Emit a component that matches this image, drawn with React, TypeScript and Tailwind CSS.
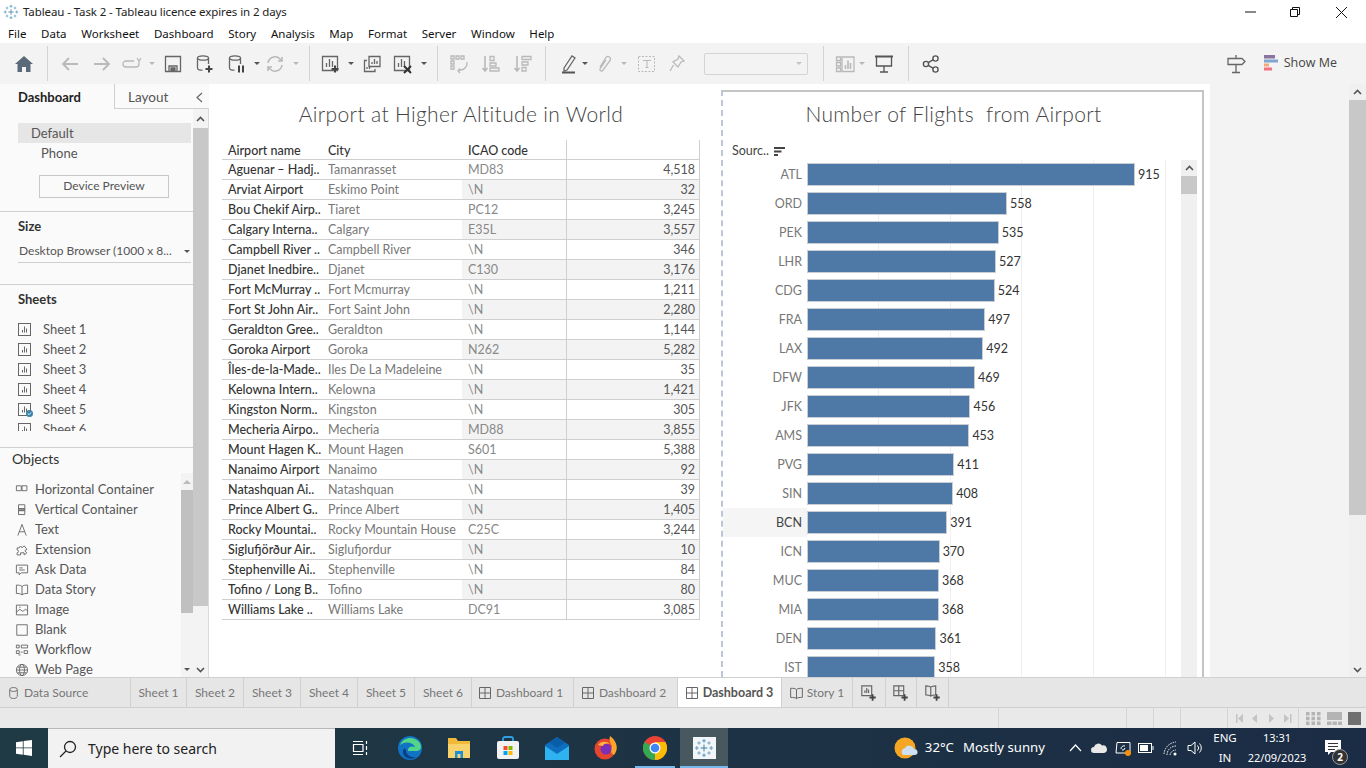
import type { ReactNode } from "react";

const rows = [
  ["Aguenar – Hadj..", "Tamanrasset", "MD83", "4,518"],
  ["Arviat Airport", "Eskimo Point", "\\N", "32"],
  ["Bou Chekif Airp..", "Tiaret", "PC12", "3,245"],
  ["Calgary Interna..", "Calgary", "E35L", "3,557"],
  ["Campbell River ..", "Campbell River", "\\N", "346"],
  ["Djanet Inedbire..", "Djanet", "C130", "3,176"],
  ["Fort McMurray ..", "Fort Mcmurray", "\\N", "1,211"],
  ["Fort St John Air..", "Fort Saint John", "\\N", "2,280"],
  ["Geraldton Gree..", "Geraldton", "\\N", "1,144"],
  ["Goroka Airport", "Goroka", "N262", "5,282"],
  ["Îles-de-la-Made..", "Iles De La Madeleine", "\\N", "35"],
  ["Kelowna Intern..", "Kelowna", "\\N", "1,421"],
  ["Kingston Norm..", "Kingston", "\\N", "305"],
  ["Mecheria Airpo..", "Mecheria", "MD88", "3,855"],
  ["Mount Hagen K..", "Mount Hagen", "S601", "5,388"],
  ["Nanaimo Airport", "Nanaimo", "\\N", "92"],
  ["Natashquan Ai..", "Natashquan", "\\N", "39"],
  ["Prince Albert G..", "Prince Albert", "\\N", "1,405"],
  ["Rocky Mountai..", "Rocky Mountain House", "C25C", "3,244"],
  ["Siglufjörður Air..", "Siglufjordur", "\\N", "10"],
  ["Stephenville Ai..", "Stephenville", "\\N", "84"],
  ["Tofino / Long B..", "Tofino", "\\N", "80"],
  ["Williams Lake ..", "Williams Lake", "DC91", "3,085"],
];

const flights: [string, number][] = [
  ["ATL", 915], ["ORD", 558], ["PEK", 535], ["LHR", 527], ["CDG", 524], ["FRA", 497],
  ["LAX", 492], ["DFW", 469], ["JFK", 456], ["AMS", 453], ["PVG", 411], ["SIN", 408],
  ["BCN", 391], ["ICN", 370], ["MUC", 368], ["MIA", 368], ["DEN", 361], ["IST", 358],
];

const menu = ["File", "Data", "Worksheet", "Dashboard", "Story", "Analysis", "Map", "Format", "Server", "Window", "Help"];

function Ic({ s = 20, c = "#666", w = 1.3, children }: { s?: number; c?: string; w?: number; children: ReactNode }) {
  return (
    <svg width={s} height={s} viewBox="0 0 20 20" fill="none" stroke={c} strokeWidth={w}>
      {children}
    </svg>
  );
}

function Slot({ className, children }: { className: string; children?: ReactNode }) {
  return <div className={`flex h-full shrink-0 items-center justify-center ${className}`}>{children}</div>;
}

function Caret({ c = "#555" }: { c?: string }) {
  return <div className="h-0 w-0 border-x-[3px] border-t-[3px] border-x-transparent" style={{ borderTopColor: c }} />;
}

function Sep({ className }: { className: string }) {
  return <div className={`h-[35px] w-px shrink-0 bg-[#d4d4d4] ${className}`} />;
}

function TableauMark({ s = 16 }: { s?: number }) {
  const crosses: [number, number, number, string][] = [
    [10, 10, 3.4, "#3d7ea6"], [10, 2.8, 1.9, "#5b9bc4"], [10, 17.2, 1.9, "#5b9bc4"], [2.8, 10, 1.9, "#5b9bc4"],
    [17.2, 10, 1.9, "#5b9bc4"], [5, 5, 1.7, "#6ba8cc"], [15, 5, 1.7, "#6ba8cc"], [5, 15, 1.7, "#6ba8cc"], [15, 15, 1.7, "#6ba8cc"],
  ];
  return (
    <svg width={s} height={s} viewBox="0 0 20 20" fill="none" strokeWidth={1}>
      {crosses.map(([x, y, r, col], i) => (
        <path key={i} d={`M${x - r} ${y}H${x + r}M${x} ${y - r}V${y + r}`} stroke={col} />
      ))}
    </svg>
  );
}

function ChartGlyph({ c = "#666" }: { c?: string }) {
  return (
    <svg width="14" height="14" viewBox="0 0 14 14" fill="none" stroke={c}>
      <rect x="0.5" y="0.5" width="12" height="12" />
      <path d="M4.5 9.5V7M6.5 9.5V3.5M8.5 9.5V5.5" />
    </svg>
  );
}

function Plus({ c = "#444" }: { c?: string }) {
  return <path d="M14 11.5v7M10.5 15h7" stroke={c} strokeWidth="2" />;
}

function Toolbar() {
  const off = "#b9b9b9";
  return (
    <div className="flex h-[41px] shrink-0 items-center bg-[#f3f3f3] pl-2">
      <Slot className="w-8">
        <svg width="18" height="16" viewBox="0 0 18 16" fill="#5a6a78"><path d="M9 0 0 8h2.5v8H7v-5h4v5h4.5V8H18z" /></svg>
      </Slot>
      <Sep className="ml-[7px]" />
      <Slot className="ml-[6px] w-8"><Ic c={off} w={1.8}><path d="M18 10H3M9 4l-6 6 6 6" /></Ic></Slot>
      <Slot className="w-[31px]"><Ic c={off} w={1.8}><path d="M2 10h15M11 4l6 6-6 6" /></Ic></Slot>
      <Slot className="w-[30px]"><Ic c={off} s={20}><path d="M12 7H4a3 3 0 0 0 0 6h10a3 3 0 0 0 3-3V7M15 4l2 3 2-3" /></Ic></Slot>
      <Slot className="w-[10px]"><Caret c={off} /></Slot>
      <Slot className="w-8"><Ic c="#666"><path d="M2.5 2.5h15v15h-15zM6 17.5V12h8v5.5" /><path d="M8 14h4v3H8z" fill="#666" /></Ic></Slot>
      <Slot className="w-8"><Ic c="#666"><ellipse cx="8" cy="4" rx="5.5" ry="2.2" /><path d="M2.5 4v10c0 1.3 2 2.2 5 2.2M13.5 4v6" /><Plus /></Ic></Slot>
      <Slot className="w-8"><Ic c="#666"><ellipse cx="8" cy="4" rx="5.5" ry="2.2" /><path d="M2.5 4v10c0 1.3 2 2.2 5 2.2M13.5 4v6" /><path d="M12 11.5v7M16 11.5v7" stroke="#444" strokeWidth="2" /></Ic></Slot>
      <Slot className="w-[7px]"><Caret /></Slot>
      <Slot className="w-[30px]"><Ic c={off} w={1.6}><path d="M3 9a7 7 0 0 1 12-4l2 2M17 11a7 7 0 0 1-12 4l-2-2" /><path d="M17 3v4h-4M3 17v-4h4" /></Ic></Slot>
      <Slot className="w-3"><Caret c={off} /></Slot>
      <Sep className="ml-[7px]" />
      <Slot className="ml-[5px] w-8"><Ic><path d="M1.5 2.5h15v14h-15z" /><path d="M5.5 13V9M8.5 13V5M11.5 13V7" /><Plus /></Ic></Slot>
      <Slot className="w-[8px]"><Caret /></Slot>
      <Slot className="ml-[1px] w-[31px]"><Ic><path d="M7 2.5h11v10H7zM10 10V8M12.5 10V5M15 10V7" /><path d="M5 6.500H2.500v11H13V15M5 15v-2M7.500 15v-3" /></Ic></Slot>
      <Slot className="w-8"><Ic><path d="M1.500 2.500h15v14h-15z" /><path d="M5.500 13V9M8.500 13V5M11.500 13V7" /><path d="M11 12l7 7M18 12l-7 7" stroke="#333" strokeWidth="2" /></Ic></Slot>
      <Slot className="w-[9px]"><Caret /></Slot>
      <Sep className="ml-[9px]" />
      <Slot className="ml-[5px] w-[32px]"><Ic c={off}><path d="M2 2h3v3H2zM7 2h3v3H7zM12 2h3v3h-3zM2 7h3v3H2zM2 12h3v3H2z" /><path d="M18 8a7 7 0 0 1-6 8l-3 1M11 14.500 9 17l2 2" /></Ic></Slot>
      <Slot className="w-[32px]"><Ic c={off}><path d="M4 2v15M1.500 14 4 17l2.500-3" strokeWidth="1.600" /><path d="M9 2.500h4v4H9zM9 9h6v3H9zM9 14h9v3H9z" /></Ic></Slot>
      <Slot className="w-[32px]"><Ic c={off}><path d="M4 2v15M1.500 14 4 17l2.500-3" strokeWidth="1.600" /><path d="M9 2.500h9v3H9zM9 8h6v3H9zM9 13.500h4v3.500H9z" /></Ic></Slot>
      <Sep className="ml-[6px]" />
      <Slot className="ml-[13px] w-[20px]"><Ic c="#666"><path d="M5 14 13 2l3 2-8 12-3 1z" /><path d="M3 18.500h13" stroke="#555" strokeWidth="2" /></Ic></Slot>
      <Slot className="ml-[1px] w-[10px]"><Caret /></Slot>
      <Slot className="ml-[2px] w-[24px]"><Ic c={off}><path d="M6 13 12 3.500a2.500 2.500 0 0 1 4 3L9 16a1.500 1.500 0 0 1-3-1l6-9" /></Ic></Slot>
      <Slot className="ml-[3px] w-[10px]"><Caret c={off} /></Slot>
      <Slot className="ml-[8px] w-[20px]"><Ic c={off} w={1}><path d="M1.500 2.500h16v15h-16z" strokeDasharray="2 1.500" /><path d="M6 6.500h8M10 6.500v7M8.500 13.500h3" /></Ic></Slot>
      <Slot className="ml-[10px] w-[20px]"><Ic c={off}><path d="M12 2l5 5-3 1-3 5-5-5 5-3zM6.500 11 3 17" /></Ic></Slot>
      <div className="ml-[17px] flex h-[22px] w-[104px] shrink-0 items-center justify-end rounded-[2px] border border-[#d4d4d4] pr-[5px]">
        <Caret c="#c4c4c4" />
      </div>
      <Sep className="ml-[15px]" />
      <Slot className="ml-[11px] w-[20px]"><Ic c={off}><path d="M1.500 3h4v3.500h-4zM1.500 8.500h4V12h-4zM1.500 14h4v3.500h-4zM7 3h12v14.500H7z" /><path d="M10.500 15v-4M13 15V6.500M15.500 15v-6" strokeWidth="1.600" /></Ic></Slot>
      <Slot className="ml-[2px] w-[10px]"><Caret c={off} /></Slot>
      <Slot className="ml-[6px] w-[22px]"><Ic c="#555"><path d="M1 2.500h18" strokeWidth="2" /><path d="M2.500 3v9h15V3M10 12v6M6 18h8" /></Ic></Slot>
      <Sep className="ml-[13px]" />
      <Slot className="ml-[12px] w-[20px]"><Ic c="#555" w={1.4}><circle cx="5" cy="10" r="2.600" /><circle cx="14.500" cy="4.500" r="2.600" /><circle cx="14.500" cy="15.500" r="2.600" /><path d="M7.300 8.700l5-3M7.300 11.300l5 3" /></Ic></Slot>
      <div className="ml-auto flex items-center">
        <Ic c="#666" s={20}><path d="M10 1v3M2 4.500h14l3 3-3 3H2zM10 11v8M6 18.500h8" /></Ic>
        <svg className="ml-[18px]" width="15" height="17" viewBox="0 0 15 17">
          <rect x="0" y="0" width="11" height="3.500" fill="#8a749f" /><rect x="0" y="4.500" width="14" height="3" fill="#7fa6cf" />
          <rect x="0" y="8.500" width="5" height="3" fill="#f3a77b" /><rect x="0" y="12.500" width="8" height="3" fill="#f2737f" />
        </svg>
        <span className="ml-[5px] mr-[29px] font-['Open_Sans',sans-serif] text-[12.500px] text-[#444]">Show Me</span>
      </div>
    </div>
  );
}

function SideScroll() {
  return (
    <div className="flex h-full w-[16px] shrink-0 flex-col border-r border-[#d9d9d9] bg-[#f3f3f3]">
      <div className="flex h-[19px] shrink-0 items-center justify-center text-[#555]">
        <svg width="9" height="6" viewBox="0 0 9 6" fill="none" stroke="#555" strokeWidth="1.600"><path d="M1 5l3.500-3.500L8 5" /></svg>
      </div>
      <div className="h-[478px] shrink-0 bg-[#c8c8c8]" />
      <div className="flex flex-1 items-end justify-center pb-[4px]">
        <svg width="9" height="6" viewBox="0 0 9 6" fill="none" stroke="#555" strokeWidth="1.600"><path d="M1 1l3.500 3.500L8 1" /></svg>
      </div>
    </div>
  );
}

function Sidebar() {
  const sheets = ["Sheet 1", "Sheet 2", "Sheet 3", "Sheet 4", "Sheet 5", "Sheet 6"];
  const objects: [string, ReactNode][] = [
    ["Horizontal Container", <path key="a" d="M2 4h7v7H2zM10 4h7v7h-7z" />],
    ["Vertical Container", <g key="b"><path d="M5 2.500h9v6H5zM5 10.500h9v6H5z" /><path d="M5 8h9v3H5z" fill="#999" /></g>],
    ["Text", <path key="c" d="M4 18 10 2l6 16M6 12.500h8" />],
    ["Extension", <path key="d" d="M3 7h3a2 2 0 1 1 4 0l3-3 4 5-3 2 3 3-4 3v-3H8v3H3v-3a2 2 0 0 0 0-4z" />],
    ["Ask Data", <path key="e" d="M2 3h16v11H9l-3 3v-3H2zM6 7h5M6 10h8" />],
    ["Data Story", <path key="f" d="M2 3c3 0 6 0 8 2 2-2 5-2 8-2v12c-3 0-6 0-8 2-2-2-5-2-8-2zM10 5v12" />],
    ["Image", <path key="g" d="M2 3h16v14H2zM2 13l5-4 4 3 4-3 3 2M6 6h2" />],
    ["Blank", <path key="h" d="M2.500 2.500h15v15h-15z" />],
    ["Workflow", <path key="i" d="M2 3h4v4H2zM9 3h9v4H9zM2 11h4v4H2zM8 13h3M13 11h5v4h-5zM5 17h3" />],
    ["Web Page", <g key="j"><circle cx="10" cy="10" r="8" /><path d="M2 10h16M3.500 6h13M3.500 14h13" /><ellipse cx="10" cy="10" rx="3.500" ry="8" /></g>],
  ];
  return (
    <div className="flex h-full w-[209px] shrink-0 flex-col font-['Lato',sans-serif] text-[13px] text-[#555]">
      <div className="flex h-[25px] shrink-0 bg-[#fafafa]">
        <div className="flex w-[114px] items-center pl-[18px] pt-[2px] font-bold text-[#222]">Dashboard</div>
        <div className="flex flex-1 items-center justify-between border-b border-l border-[#cfcfcf] pl-[13px] pr-[6px] pt-[2px] text-[13.500px]">
          <span>Layout</span>
          <svg width="7" height="11" viewBox="0 0 7 11" fill="none" stroke="#666" strokeWidth="1.200"><path d="M6 1 1 5.500 6 10" /></svg>
        </div>
      </div>
      <div className="flex min-h-0 flex-1">
        <div className="flex w-[193px] shrink-0 flex-col bg-[#fafafa]">
          <div className="h-[103px] shrink-0 border-b border-[#cfcfcf] pl-[18px]">
            <div className="mt-[14px] flex h-[20px] w-[173px] items-center bg-[#e6e6e6] pl-[13px] pt-[2px]">Default</div>
            <div className="flex h-[20px] items-center pl-[23px] pt-[2px]">Phone</div>
            <div className="ml-[21px] mt-[12px] flex h-[23px] w-[130px] items-center justify-center border border-[#c8c8c8] pb-px text-[12px]">Device Preview</div>
          </div>
          <div className="h-[73px] shrink-0 border-b border-[#cfcfcf] pl-[18px]">
            <div className="mt-[5px] font-bold text-[#333]">Size</div>
            <div className="mt-[4px] flex h-[22px] w-[173px] items-center justify-between border-b border-[#cfcfcf] pl-px pr-[1px] text-[12px]">
              <span>Desktop Browser (1000 x 8...</span><Caret />
            </div>
          </div>
          <div className="h-[163px] shrink-0 overflow-hidden border-b border-[#cfcfcf] pl-[18px]">
            <div className="mt-[5px] font-bold text-[#333]">Sheets</div>
            <div className="mt-[10px] h-[111px] overflow-hidden">
              {sheets.map((s, i) => (
                <div key={s} className="relative flex h-[20px] items-center gap-[11px]">
                  <ChartGlyph />
                  <span>{s}</span>
                  {i === 4 && (
                    <svg className="absolute left-[8px] top-[10px]" width="7" height="7" viewBox="0 0 7 7">
                      <circle cx="3.500" cy="3.500" r="3.500" fill="#3b83a8" />
                      <path d="M1.800 3.500l1.200 1.200 2-2.200" fill="none" stroke="#fff" strokeWidth="0.900" />
                    </svg>
                  )}
                </div>
              ))}
            </div>
          </div>
          <div className="flex h-[25px] shrink-0 items-center pb-[5px] pl-[12px] text-[14px] text-[#333]">Objects</div>
          <div className="flex min-h-0 flex-1">
            <div className="w-[181px] shrink-0 overflow-hidden pl-[15px] pt-[7px]">
              {objects.map(([label, icon]) => (
                <div key={label} className="flex h-[20px] items-center gap-[6px]">
                  <Ic s={14} c="#666" w={1.300}>{icon}</Ic>
                  <span className="whitespace-nowrap text-[13px]">{label}</span>
                </div>
              ))}
            </div>
            <div className="flex w-[12px] shrink-0 flex-col bg-[#f3f3f3]">
              <div className="flex h-[17px] items-center justify-center"><div className="h-0 w-0 border-x-[4px] border-b-[4px] border-x-transparent border-b-[#bbb]" /></div>
              <div className="h-[123px] bg-[#c0c0c0]" />
              <div className="mb-[6px] mt-auto flex justify-center"><Caret /></div>
            </div>
          </div>
        </div>
        <SideScroll />
      </div>
    </div>
  );
}

function SheetTable() {
  return (
    <div className="w-[478px] shrink-0 font-['Lato',sans-serif]">
      <div className="flex h-[56px] items-center justify-center pt-[4px] text-[21px] font-light tracking-[0.35px] text-[#444]">Airport at Higher Altitude in World</div>
      <div className="flex h-[20px] border-b border-[#cfcfcf] text-[12.500px] font-medium text-[#333]">
        <div className="flex w-[100px] items-center pl-[6px] pt-[3px]">Airport name</div>
        <div className="flex w-[140px] items-center pl-[6px] pt-[3px]">City</div>
        <div className="flex w-[104px] items-center pl-[6px] pt-[3px]">ICAO code</div>
        <div className="w-[134px] border-x border-[#cfcfcf]" />
      </div>
      {rows.map((r, i) => (
        <div key={r[0]} className="flex h-[20px] border-b border-[#cfcfcf] text-[12.500px]">
          <div className="flex w-[100px] items-center overflow-hidden whitespace-nowrap pl-[6px] pt-[2px] font-medium text-[#333]">{r[0]}</div>
          <div className="flex w-[140px] items-center whitespace-nowrap pl-[6px] pt-[2px] text-[#777]">{r[1]}</div>
          <div className={`flex w-[104px] items-center pl-[6px] pt-[2px] text-[#888] ${i % 2 ? "bg-[#f3f3f3]" : ""}`}>{r[2]}</div>
          <div className={`flex w-[134px] items-center justify-end border-x border-[#cfcfcf] pr-[4px] pt-[2px] text-[#555] ${i % 2 ? "bg-[#f3f3f3]" : ""}`}>{r[3]}</div>
        </div>
      ))}
    </div>
  );
}

function FlightsChart() {
  return (
    <div className="ml-[21px] mt-[6px] flex h-[587px] w-[483px] shrink-0 flex-col overflow-hidden border-x-2 border-t-2 border-x-[#c4c4c4] border-t-[#c4c4c4] border-l-[#bcc6d6] font-['Lato',sans-serif] [border-left-style:dashed]">
      <div className="flex h-[43px] shrink-0 items-center justify-center pr-[18px] pt-[1px] text-[21px] font-light tracking-[0.35px] text-[#444]">Number of Flights&nbsp; from Airport</div>
      <div className="flex h-[25px] shrink-0 items-center gap-[5px] pl-[9px] pt-[8px] text-[12.500px] text-[#444]">
        <span>Sourc..</span>
        <svg width="11" height="10" viewBox="0 0 11 10" fill="#444"><rect width="11" height="2" /><rect y="3.500" width="7.500" height="2" /><rect y="7" width="4" height="2" /></svg>
      </div>
      <div className="flex min-h-0 flex-1">
        <div className="relative w-[443px] shrink-0 pt-[3px]">
          {[878, 950, 1021, 1093, 1165].map((x) => (
            <div key={x} className="absolute bottom-0 top-0 w-px bg-[#efefef]" style={{ left: x - 723 }} />
          ))}
          {flights.map(([code, n]) => (
            <div key={code} className="relative mb-[6px] flex h-[23px] items-center text-[12.500px]">
              <div className={`flex h-[29px] w-[84px] shrink-0 items-center justify-end pr-[5px] pt-px ${code === "BCN" ? "bg-[#f5f5f5] text-[#444]" : "text-[#777]"}`}>{code}</div>
              <div className="h-[23px] shrink-0 border border-[#c9ced4] bg-[#4e79a7]" style={{ width: (n / 915) * 328 }} />
              <span className="ml-[3px] pt-px text-[#333]">{n}</span>
            </div>
          ))}
        </div>
        <div className="ml-[15px] w-[16px] shrink-0 bg-[#f0f0f0]">
          <div className="flex h-[16px] items-center justify-center">
            <svg width="9" height="6" viewBox="0 0 9 6" fill="none" stroke="#555" strokeWidth="1.600"><path d="M1 5l3.500-3.500L8 5" /></svg>
          </div>
          <div className="h-[18px] bg-[#c8c8c8]" />
        </div>
      </div>
    </div>
  );
}

function TabBar() {
  const tabClass = "flex h-full shrink-0 items-center border-r border-[#d0d0d0] pt-px";
  const dash = (
    <svg width="12" height="12" viewBox="0 0 12 12" fill="none" stroke="#666"><path d="M.5.500h11v11H.5zM6 .500v11M.5 6h11" /></svg>
  );
  const sheetTabs: [string, string][] = [["Sheet 1", "w-[56px]"], ["Sheet 2", "w-[57px]"], ["Sheet 3", "w-[57px]"], ["Sheet 4", "w-[57px]"], ["Sheet 5", "w-[57px]"], ["Sheet 6", "w-[57px]"]];
  return (
    <div className="flex h-[31px] shrink-0 border-y border-[#d0d0d0] bg-[#e6e6e6] font-['Lato',sans-serif] text-[12px] text-[#777]">
      <div className={`${tabClass} w-[131px] gap-[6px] pl-[9px]`}>
        <svg width="9" height="12" viewBox="0 0 9 12" fill="none" stroke="#777"><ellipse cx="4.500" cy="2.500" rx="3.800" ry="2" /><path d="M.7 2.500v7c0 1 1.700 2 3.800 2s3.800-1 3.800-2v-7" /></svg>
        Data Source
      </div>
      {sheetTabs.map(([s, w]) => (
        <div key={s} className={`${tabClass} ${w} justify-center`}>{s}</div>
      ))}
      <div className={`${tabClass} w-[102px] justify-center gap-[5px] pr-[3px]`}>{dash}Dashboard 1</div>
      <div className={`${tabClass} w-[104px] justify-center gap-[5px] pr-[3px]`}>{dash}Dashboard 2</div>
      <div className={`${tabClass} w-[104px] justify-center gap-[5px] bg-white text-[12.500px] font-bold text-[#555]`}>{dash}Dashboard 3</div>
      <div className={`${tabClass} w-[71px] justify-center gap-[4px]`}>
        <Ic s={13} c="#666" w={1.500}><path d="M1 2c4 0 7 0 9 2 2-2 5-2 9-2v14c-4 0-7 0-9 2-2-2-5-2-9-2zM10 4v14" /></Ic>Story 1
      </div>
      <div className={`${tabClass} w-[33px] justify-center`}><Ic s={18} c="#666"><path d="M2 2h11v11H2zM5.500 10V7M7.500 10V4.500M9.500 10V6" /><Plus /></Ic></div>
      <div className={`${tabClass} w-[31px] justify-center`}><Ic s={18} c="#666"><path d="M2 2h11v11H2zM7.500 2v11M2 7.500h11" /><Plus /></Ic></div>
      <div className={`${tabClass} w-[32px] justify-center`}><Ic s={18} c="#666"><path d="M2 2c2 0 4 0 5.500 1.500C9 2 11 2 13 2v10c-2 0-4 0-5.500 1.500C6 12 4 12 2 12zM7.500 3.500v10" /><Plus /></Ic></div>
    </div>
  );
}

function StatusBar() {
  return (
    <div className="flex h-[20px] shrink-0 bg-[#e9e9e9]">
      <div className="w-[999px] shrink-0 border-r border-[#d4d4d4]" />
      <div className="w-[128px] shrink-0 border-r border-[#d4d4d4]" />
      <div className="w-[27px] shrink-0 border-r border-[#d4d4d4]" />
      <div className="w-[27px] shrink-0 border-r border-[#d4d4d4]" />
      <div className="w-[47px] shrink-0 border-r border-[#d4d4d4]" />
      <div className="flex w-[71px] shrink-0 items-center gap-[9px] border-r border-[#d4d4d4] pl-[8px]">
        <svg width="61" height="9" viewBox="0 0 61 9" fill="#c4c4c4">
          <path d="M0 0h1.500v9H0zM7 0v9L2 4.500zM21 0v9l-5-4.500zM33 0v9l5-4.500zM48 0v9l5-4.500zM54 0h1.500v9H54z" />
        </svg>
      </div>
      <div className="flex flex-1 items-center gap-[6px] pl-[7px]">
        <svg width="15" height="13" viewBox="0 0 15 13" fill="#b4b4b4"><path d="M0 0h3.500v3.500H0zM5.500 0H9v3.500H5.500zM11 0h3.500v3.500H11zM0 4.700h3.500v3.500H0zM5.500 4.700H9v3.500H5.500zM11 4.700h3.500v3.500H11zM0 9.400h3.500v3.500H0zM5.500 9.400H9v3.500H5.500zM11 9.400h3.500v3.500H11z" /></svg>
        <svg width="15" height="13" viewBox="0 0 15 13" fill="#b4b4b4"><path d="M0 0h15v8H0zM0 9.500h4.500V13H0zM5.500 9.500H10V13H5.500zM11 9.500h4V13h-4z" /></svg>
        <div className="h-[13px] w-[13px] bg-[#707070]" />
      </div>
    </div>
  );
}

function Taskbar() {
  return (
    <div className="flex h-[40px] shrink-0 items-center bg-gradient-to-r from-[#1f3a44] to-[#1b2c45] font-['Noto_Sans',sans-serif] text-white">
      <Slot className="w-[48px]">
        <svg width="16" height="16" viewBox="0 0 16 16" fill="#fff"><path d="M0 2.200 6.800 1.200V7.500H0zM7.600 1.100 16 0V7.500H7.600zM0 8.300h6.800v6.400L0 13.800zM7.600 8.300H16V16l-8.400-1.200z" /></svg>
      </Slot>
      <div className="flex h-full w-[287px] shrink-0 items-center border-t border-[#b8b8b8] bg-[#f2f2f2] pl-[11px] text-[14px] text-[#222]">
        <svg width="18" height="18" viewBox="0 0 18 18" fill="none" stroke="#222" strokeWidth="1.300"><circle cx="11" cy="7" r="5.500" /><path d="M7 11l-6 6" /></svg>
        <span className="ml-[11px]">Type here to search</span>
      </div>
      <Slot className="w-[50px]">
        <svg width="16" height="16" viewBox="0 0 16 16" fill="none" stroke="#fff" strokeWidth="1.200"><path d="M1 1.500h10M1 14.500h10M1.500 4.500h9.500v7H1.500zM14.500 1v3M14.500 6v4M14.500 12v3" /></svg>
      </Slot>
      <Slot className="w-[49px]">
        <svg width="24" height="24" viewBox="0 0 24 24"><circle cx="12" cy="12" r="12" fill="#1173c4" /><path d="M2 9C5 1 16-1 22 7c2 4 1 8-3 8H10c0-5 4-5 7-4-2-5-10-6-15-2z" fill="#52d48a" /><path d="M8 14c0 5 5 8 10 7-8 5-16-2-12-9z" fill="#0c3f86" /></svg>
      </Slot>
      <Slot className="w-[49px]">
        <svg width="22" height="20" viewBox="0 0 22 20"><path d="M0 0h8l2 3h12v17H0z" fill="#f0b93a" /><path d="M0 6h22v14H0z" fill="#f8d26a" /><path d="M7 13h8v7H7z" fill="#1d8fd6" /><path d="M9.500 16h3v4h-3z" fill="#f8d26a" /></svg>
      </Slot>
      <Slot className="w-[49px]">
        <svg width="24" height="24" viewBox="0 0 24 24"><path d="M7 7V3a2 2 0 0 1 2-2h6a2 2 0 0 1 2 2v4" fill="none" stroke="#2ea0e6" strokeWidth="1.800" /><rect x="1" y="5" width="22" height="18" rx="2" fill="#f2f2f2" /><rect x="7.500" y="10" width="4" height="4" fill="#f25022" /><rect x="12.500" y="10" width="4" height="4" fill="#7fba00" /><rect x="7.500" y="15" width="4" height="4" fill="#00a4ef" /><rect x="12.500" y="15" width="4" height="4" fill="#ffb900" /></svg>
      </Slot>
      <Slot className="w-[49px]">
        <svg width="24" height="24" viewBox="0 0 24 24"><path d="M12 1 0 9v15h24V9z" fill="#0f6fbf" /><path d="M0 10l12 8 12-8v14H0z" fill="#2fb2f0" /><path d="M12 1 4 6.500 12 12l8-5.500z" fill="#0a5ea8" /></svg>
      </Slot>
      <Slot className="w-[49px]">
        <svg width="24" height="24" viewBox="0 0 24 24"><circle cx="11" cy="13" r="10.500" fill="#e5462f" /><path d="M16 0c7 5 9 13 4 19-3-1-4-5-2-9-2-3-3-6-2-10z" fill="#ffa52c" /><circle cx="12" cy="13" r="5.500" fill="#7b2fb8" /><path d="M4 9c3-4 9-4 12-1-4-1-7 0-7 2z" fill="#ffb640" /></svg>
      </Slot>
      <div className="relative flex h-full w-[49px] shrink-0 items-center justify-center">
        <svg width="24" height="24" viewBox="0 0 24 24">
          <circle cx="12" cy="12" r="12" fill="#ea4335" />
          <path d="M12 12 1.600 6A12 12 0 0 0 12 24z" fill="#34a853" />
          <path d="M12 12v12A12 12 0 0 0 22.400 6H12z" fill="#fbbc05" />
          <circle cx="12" cy="12" r="5.500" fill="#fff" /><circle cx="12" cy="12" r="4.300" fill="#4285f4" />
        </svg>
        <div className="absolute bottom-0 left-[5px] h-[2px] w-[40px] bg-[#76b9ed]" />
      </div>
      <div className="relative ml-[1px] flex h-full w-[48px] shrink-0 items-center justify-center bg-[#47595f]">
        <div className="flex h-[22px] w-[23px] items-center justify-center bg-[#f3f6f8]"><TableauMark s={20} /></div>
        <div className="absolute bottom-0 left-0 h-[2px] w-full bg-[#76b9ed]" />
      </div>
      <div className="ml-auto flex h-full items-center text-[13.200px]">
        <svg width="24" height="22" viewBox="0 0 24 22"><circle cx="11" cy="11" r="10.500" fill="#f5a623" /><path d="M9 18a4 4 0 0 1 2-7 5 5 0 0 1 9 1 3 3 0 0 1 1 6z" fill="#cfe0f2" /></svg>
        <span className="ml-[7px]">32°C</span>
        <span className="ml-[9px]">Mostly sunny</span>
        <svg className="ml-[24px]" width="13" height="8" viewBox="0 0 13 8" fill="none" stroke="#fff" strokeWidth="1.200"><path d="M1 7l5.500-6L12 7" /></svg>
        <svg className="ml-[9px]" width="16" height="10" viewBox="0 0 16 10" fill="#e8e8e8"><path d="M3 10a3 3 0 0 1 0-6 4.500 4.500 0 0 1 8-1.500A3.800 3.800 0 0 1 13 10z" /></svg>
        <svg className="ml-[8px]" width="16" height="16" viewBox="0 0 16 16" fill="none" stroke="#fff"><path d="M2 2.500h13V13H1z" /><path d="M6 9a3 3 0 0 1 4-3M10 8a2.500 2.500 0 0 1-3 2" /><circle cx="13" cy="13" r="3" fill="#f7900a" stroke="none" /></svg>
        <svg className="ml-[7px]" width="16" height="10" viewBox="0 0 16 10" fill="none" stroke="#fff"><rect x=".5" y=".5" width="13" height="9" /><rect x="2" y="2" width="8" height="6" fill="#fff" stroke="none" /><path d="M15 3v4" /></svg>
        <svg className="ml-[9px]" width="16" height="15" viewBox="0 0 16 15" fill="none" stroke="#fff"><path d="M1 13A13 13 0 0 1 13 1M4 14A9 9 0 0 1 13 5M7 14a6 6 0 0 1 6-5" strokeDasharray="1.500 1" /><circle cx="12" cy="13" r="1.500" fill="#fff" stroke="none" /></svg>
        <svg className="ml-[8px]" width="17" height="14" viewBox="0 0 17 14" fill="none" stroke="#fff"><path d="M1 4.500h3L8 1v12L4 9.500H1zM10.500 4.500a3.500 3.500 0 0 1 0 5M12.500 2.500a6.500 6.500 0 0 1 0 9" /></svg>
        <div className="ml-[6px] flex w-[30px] flex-col items-center text-[11.500px] leading-[20px]"><span>ENG</span><span>IN</span></div>
        <div className="ml-[7px] flex w-[60px] flex-col items-center text-[11px] leading-[20px]"><span>13:31</span><span>22/09/2023</span></div>
        <div className="relative ml-[12px] mr-[17px] flex h-full w-[30px] items-center justify-center">
          <svg width="18" height="17" viewBox="0 0 18 17"><path d="M0 0h16v12H6l-3 3v-3H0z" fill="#fff" /><path d="M3 3.500h10M3 6.500h10M3 9.500h7" stroke="#333" /></svg>
          <div className="absolute bottom-[3px] right-[1px] flex h-[16px] w-[16px] items-center justify-center rounded-full border border-[#999] bg-[#333] text-[10px] font-bold">2</div>
        </div>
      </div>
    </div>
  );
}

export default function App() {
  return (
    <div className="flex h-[768px] w-[1366px] flex-col overflow-hidden bg-white">
      <div className="flex h-[24px] shrink-0 items-center pl-[3px] font-['Noto_Sans',sans-serif] text-[11.500px] tracking-[-0.1px] text-[#222]">
        <TableauMark s={16} />
        <span className="ml-[4px]">Tableau - Task 2 - Tableau licence expires in 2 days</span>
        <div className="ml-auto flex items-center">
          <svg width="11" height="2" viewBox="0 0 11 2"><path d="M0 1h11" stroke="#111" /></svg>
          <svg className="ml-[34px]" width="10" height="10" viewBox="0 0 10 10" fill="none" stroke="#111"><path d="M.5 2.500h7v7h-7zM2.500 2.500v-2h7v7h-2" /></svg>
          <svg className="ml-[36px] mr-[19px]" width="11" height="11" viewBox="0 0 11 11" stroke="#111"><path d="M0 0l11 11M11 0 0 11" /></svg>
        </div>
      </div>
      <div className="flex h-[19px] shrink-0 items-center gap-[14.700px] pl-2 font-['Noto_Sans',sans-serif] text-[11.500px] text-[#111]">
        {menu.map((m) => <span key={m}>{m}</span>)}
      </div>
      <Toolbar />
      <div className="flex min-h-0 flex-1">
        <Sidebar />
        <div className="flex h-full w-[1001px] shrink-0 items-start overflow-hidden bg-white pl-[13px]">
          <SheetTable />
          <FlightsChart />
        </div>
        <div className="h-full w-[139px] shrink-0 bg-[#f3f3f3]" />
        <div className="flex h-full w-[17px] shrink-0 flex-col bg-[#f0f0f0]">
          <div className="flex h-[16px] shrink-0 items-center justify-center">
            <svg width="9" height="6" viewBox="0 0 9 6" fill="none" stroke="#555" strokeWidth="1.600"><path d="M1 5l3.500-3.500L8 5" /></svg>
          </div>
          <div className="h-[415px] shrink-0 bg-[#c8c8c8]" />
          <div className="mt-auto flex justify-center pb-[4px]">
            <svg width="9" height="6" viewBox="0 0 9 6" fill="none" stroke="#555" strokeWidth="1.600"><path d="M1 1l3.500 3.500L8 1" /></svg>
          </div>
        </div>
      </div>
      <TabBar />
      <StatusBar />
      <Taskbar />
    </div>
  );
}
